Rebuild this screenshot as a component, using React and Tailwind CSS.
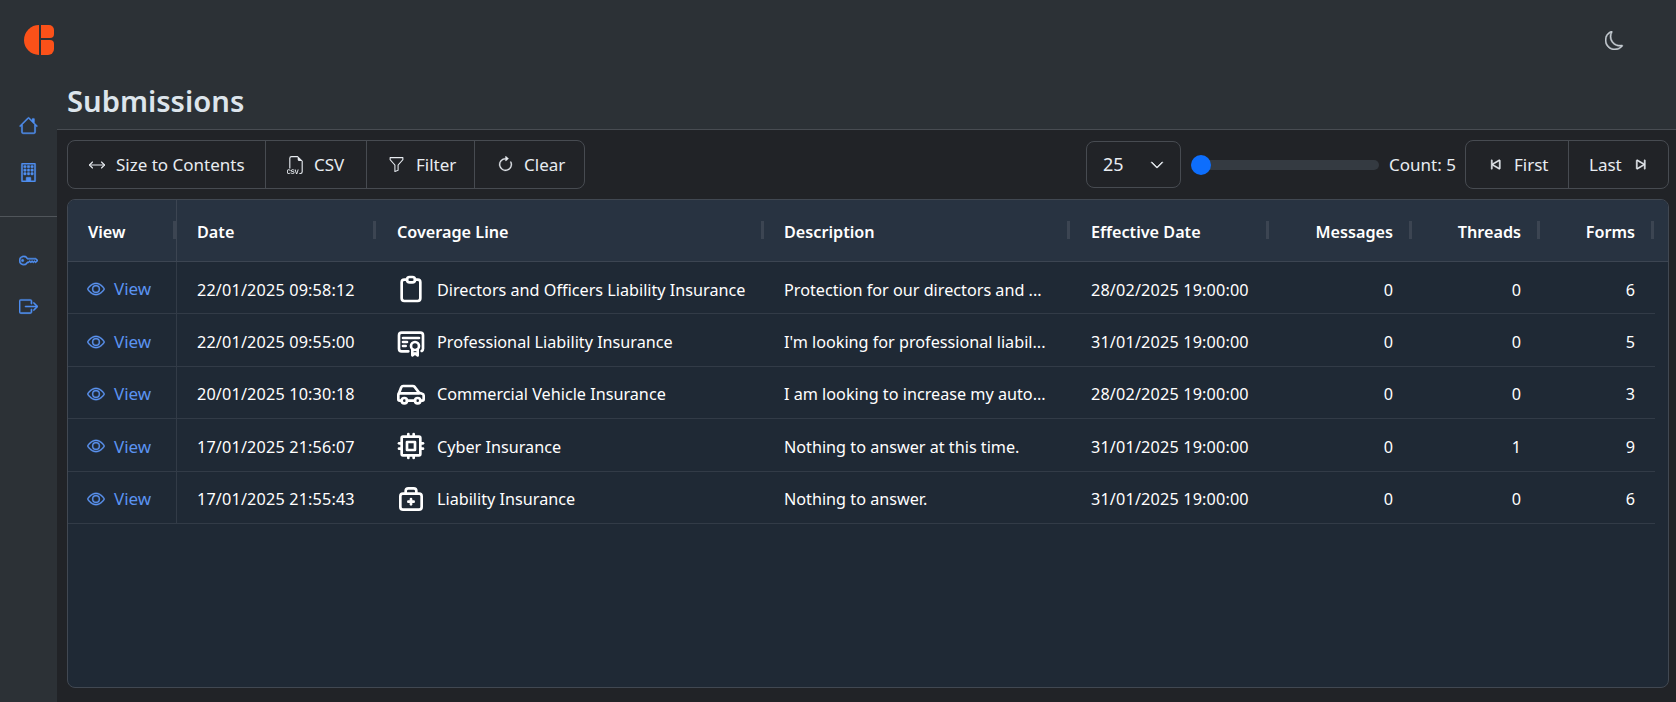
import React from 'react'
import { BsHouse, BsBuilding, BsKey, BsBoxArrowRight, BsMoon, BsFiletypeCsv, BsFunnel, BsArrowClockwise, BsChevronDown, BsSkipStart, BsSkipEnd, BsEye } from 'react-icons/bs'
import { TbClipboard, TbCertificate, TbCpu, TbFirstAidKit } from 'react-icons/tb'
import { MoveHorizontal } from 'lucide-react'

function CarIcon({ size, strokeWidth }) {
    return (
        <svg width={size} height={size} viewBox="0 0 24 24" fill="none" stroke="currentColor" strokeWidth={strokeWidth} strokeLinecap="round" strokeLinejoin="round">
            <circle cx="7" cy="17" r="2" />
            <circle cx="17" cy="17" r="2" />
            <path d="M5 17H3.5a1 1 0 0 1-1-1v-3.5l2.2-5.6a1.5 1.5 0 0 1 1.4-.9h7.2a2 2 0 0 1 1.5.7L18 11l2.4.8a1.5 1.5 0 0 1 1.1 1.4V16a1 1 0 0 1-1 1H19" />
            <path d="M9 17h6" />
            <path d="M3 11.5h15" />
        </svg>
    )
}

const rows = [
    { date: '22/01/2025 09:58:12', icon: TbClipboard, line: 'Directors and Officers Liability Insurance', desc: 'Protection for our directors and ...', eff: '28/02/2025 19:00:00', messages: 0, threads: 0, forms: 6 },
    { date: '22/01/2025 09:55:00', icon: TbCertificate, line: 'Professional Liability Insurance', desc: "I'm looking for professional liabil...", eff: '31/01/2025 19:00:00', messages: 0, threads: 0, forms: 5 },
    { date: '20/01/2025 10:30:18', icon: CarIcon, line: 'Commercial Vehicle Insurance', desc: 'I am looking to increase my auto...', eff: '28/02/2025 19:00:00', messages: 0, threads: 0, forms: 3 },
    { date: '17/01/2025 21:56:07', icon: TbCpu, line: 'Cyber Insurance', desc: 'Nothing to answer at this time.', eff: '31/01/2025 19:00:00', messages: 0, threads: 1, forms: 9 },
    { date: '17/01/2025 21:55:43', icon: TbFirstAidKit, line: 'Liability Insurance', desc: 'Nothing to answer.', eff: '31/01/2025 19:00:00', messages: 0, threads: 0, forms: 6 },
]

function Logo() {
    return (
        <svg width="30" height="30" viewBox="0 0 30 30" fill="#fb5119">
            <path d="M15 0 V30 A15 15 0 0 1 15 0 Z" />
            <path d="M17 0 H25 A5 5 0 0 1 30 5 V9 A4 4 0 0 1 26 13 H17 Z" />
            <path d="M17 15 H26 A4 4 0 0 1 30 19 V24 A6 6 0 0 1 24 30 H17 Z" />
        </svg>
    )
}

function Handle({ className }) {
    return <span className={`absolute top-[21px] h-[18px] w-[3px] bg-[#3c4552] ${className}`} />
}

function HeadCell({ width, right, children, handle, left }) {
    return (
        <div className={`relative flex h-full shrink-0 items-center pt-[3px] font-semibold ${width} ${right ? 'justify-end pr-[19px]' : left || 'pl-[20px]'}`}>
            {children}
            <Handle className={handle || 'right-0'} />
        </div>
    )
}

function ToolButton({ icon, label, className }) {
    return (
        <button className={`flex h-full items-center border-r border-[#474b51] last:border-r-0 ${className}`}>
            {icon}
            <span>{label}</span>
        </button>
    )
}

export default function App() {
    return (
        <div className="flex h-[702px] w-[1676px] overflow-hidden bg-[#2c3136] font-['Noto_Sans',sans-serif] text-[16.2px] text-[#e8ecf1]">
            <aside className="flex w-[57px] shrink-0 flex-col">
                <div className="flex h-[107px] items-start pl-[24px] pt-[25px]">
                    <Logo />
                </div>
                <div className="flex h-[110px] flex-col items-center gap-[28px] border-b border-[#50555a] pt-[9px] text-[#4f8ef0]">
                    <BsHouse size={19} strokeWidth={0.4} />
                    <BsBuilding size={19} strokeWidth={0.4} />
                </div>
                <div className="flex flex-col items-center gap-[27px] pt-[34px] text-[#4f8ef0]">
                    <BsKey size={19} strokeWidth={0.4} />
                    <BsBoxArrowRight size={19} strokeWidth={0.4} />
                </div>
            </aside>

            <main className="flex min-w-0 flex-1 flex-col">
                <header className="flex h-[130px] shrink-0 items-start justify-between border-b border-[#484c52] pl-[10px] pr-[52px]">
                    <h1 className="mt-[79px] text-[29.2px] leading-[44px] font-semibold text-[#dde5ec]">Submissions</h1>
                    <BsMoon size={19} strokeWidth={0.4} className="mt-[31px] text-[#c6ccd2]" />
                </header>

                <div className="flex flex-1 flex-col bg-[#212327] pl-[10px] pr-[7px] pt-[10px]">
                    <div className="flex h-[49px] shrink-0 items-center justify-between text-[17px]">
                        <div className="flex h-full items-center rounded-lg border border-[#474b51]">
                            <ToolButton className="w-[198px] gap-[10px] pl-[20px]" icon={<MoveHorizontal size={18} strokeWidth={1.5} />} label="Size to Contents" />
                            <ToolButton className="w-[101px] gap-[9px] pl-[21px]" icon={<BsFiletypeCsv size={18} />} label="CSV" />
                            <ToolButton className="w-[108px] gap-[11px] pl-[21px]" icon={<BsFunnel size={17} />} label="Filter" />
                            <ToolButton className="w-[109px] gap-[10px] pl-[22px]" icon={<BsArrowClockwise size={17} strokeWidth={0.3} />} label="Clear" />
                        </div>

                        <div className="flex h-full items-center">
                            <div className="flex h-[47px] w-[95px] items-center justify-between rounded-lg border border-[#474b51] pl-[16px] pr-[16px] text-[18px]">
                                <span>25</span>
                                <BsChevronDown size={14} strokeWidth={0.8} />
                            </div>
                            <div className="relative ml-[10px] h-[10px] w-[188px] rounded-full bg-[#343a41]">
                                <span className="absolute left-0 top-[-5px] h-[20px] w-[20px] rounded-full bg-[#0d6efd]" />
                            </div>
                            <span className="ml-[10px] w-[76px]">Count: 5</span>
                            <div className="flex h-full w-[204px] items-center rounded-lg border border-[#474b51]">
                                <button className="flex h-full w-[103px] items-center gap-[10px] border-r border-[#474b51] pl-[21px]">
                                    <BsSkipStart size={17} strokeWidth={0.5} />
                                    <span>First</span>
                                </button>
                                <button className="flex h-full flex-1 items-center gap-[10px] pl-[20px]">
                                    <span>Last</span>
                                    <BsSkipEnd size={17} strokeWidth={0.5} />
                                </button>
                            </div>
                        </div>
                    </div>

                    <div className="mt-[10px] h-[489px] overflow-hidden rounded-lg border border-[#414852] bg-[#1f2935] text-white">
                        <div className="flex h-[62px] border-b border-[#3c4552] bg-[#283341]">
                            <HeadCell width="w-[109px] border-r border-[#3c4552]" handle="right-0">View</HeadCell>
                            <HeadCell width="w-[199px]">Date</HeadCell>
                            <HeadCell width="w-[388px]" left="pl-[21px]">Coverage Line</HeadCell>
                            <HeadCell width="w-[306px]">Description</HeadCell>
                            <HeadCell width="w-[199px]" left="pl-[21px]">Effective Date</HeadCell>
                            <HeadCell width="w-[143px]" right>Messages</HeadCell>
                            <HeadCell width="w-[128px]" right>Threads</HeadCell>
                            <HeadCell width="w-[114px]" right>Forms</HeadCell>
                        </div>
                        {rows.map((row, index) => {
                            const Icon = row.icon
                            return (
                                <div key={index} className="flex h-[52.4px] w-[1587px] items-center border-b border-[#323b47]">
                                    <div className="flex h-full w-[109px] shrink-0 items-center gap-[9px] border-r border-[#323b47] pl-[19px] pt-[3px] text-[17px] text-[#5b93f1]">
                                        <BsEye size={18} strokeWidth={0.3} />
                                        <span>View</span>
                                    </div>
                                    <div className="w-[199px] shrink-0 pl-[20px] pt-[4px] tracking-[0.17px]">{row.date}</div>
                                    <div className="flex w-[388px] shrink-0 items-center gap-[10px] pl-[19px] pt-[3px]">
                                        <Icon size={32} strokeWidth={2} />
                                        <span className="pt-[1px]">{row.line}</span>
                                    </div>
                                    <div className="w-[306px] shrink-0 pl-[20px] pt-[4px]">{row.desc}</div>
                                    <div className="w-[199px] shrink-0 pl-[21px] pt-[4px] tracking-[0.17px]">{row.eff}</div>
                                    <div className="w-[143px] shrink-0 pr-[19px] pt-[4px] text-right">{row.messages}</div>
                                    <div className="w-[128px] shrink-0 pr-[19px] pt-[4px] text-right">{row.threads}</div>
                                    <div className="w-[114px] shrink-0 pr-[19px] pt-[4px] text-right">{row.forms}</div>
                                </div>
                            )
                        })}
                    </div>
                </div>
            </main>
        </div>
    )
}
